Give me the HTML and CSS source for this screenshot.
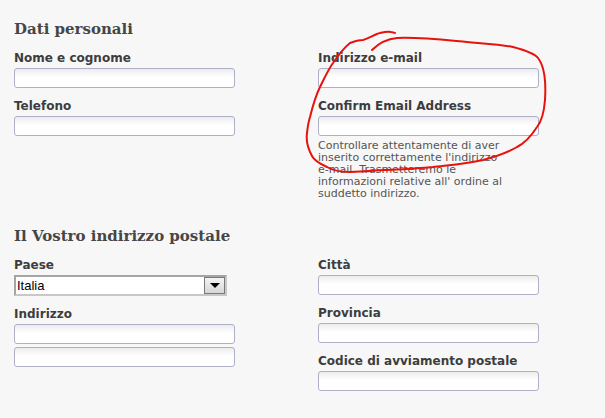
FILE: index.html
```html
<!DOCTYPE html>
<html lang="it">
<head>
    <meta charset="UTF-8" />
    <title>Dati personali</title>
    <link rel="stylesheet" href="styles.css">
</head>
<body>
    <main class="pagina">
        <section class="sezione">
            <h2>Dati personali</h2>
            <div class="colonne">
                <div class="colonna">
                    <label class="campo">Nome e cognome
                        <input type="text" class="testo">
                    </label>
                    <label class="campo">Telefono
                        <input type="text" class="testo">
                    </label>
                </div>
                <div class="colonna">
                    <label class="campo">Indirizzo e-mail
                        <input type="text" class="testo">
                    </label>
                    <label class="campo">Confirm Email Address
                        <input type="text" class="testo">
                    </label>
                    <p class="aiuto">Controllare attentamente di aver inserito correttamente l'indirizzo <span class="unito">e-mail.</span> Trasmetteremo le informazioni relative all' ordine al suddetto indirizzo.</p>
                </div>
            </div>

            <!-- cerchio rosso disegnato a mano -->
            <svg class="cerchio" width="605" height="220" viewBox="0 0 605 220">
                <path d="M372 50 C378 44 386 39 397 38 C420 37 445 40 467 42 C490 44 505 45 513 47 C528 51 535 54 538 58 C545 67 546 84 545 100 C544 113 541 122 537 127 C530 138 525 143 517 147 C505 154 495 157 483 160 C465 164 450 165 433 167 C410 169 395 170 383 170 C370 171 360 172 350 172 C340 172 332 170 327 167 C318 163 314 160 312 156 C307 147 306 140 307 133 C308 124 309 120 310 117 C313 105 316 95 320 87 C325 77 328 70 333 63 C339 54 344 48 350 43 C355 41 358 40 363 40 C370 38 375 34 380 33 C384 32 388 31 391 32 C393 32 394 33 395 33" />
            </svg>
        </section>

        <section class="sezione">
            <h2>Il Vostro indirizzo postale</h2>
            <div class="colonne">
                <div class="colonna">
                    <label class="campo">Paese
                        <span class="scelta">
                            <select>
                                <option>Italia</option>
                            </select>
                            <span class="freccia"></span>
                        </span>
                    </label>
                    <label class="campo">Indirizzo
                        <input type="text" class="testo">
                    </label>
                    <input type="text" class="testo riga2">
                </div>
                <div class="colonna">
                    <label class="campo">Città
                        <input type="text" class="testo">
                    </label>
                    <label class="campo">Provincia
                        <input type="text" class="testo">
                    </label>
                    <label class="campo">Codice di avviamento postale
                        <input type="text" class="testo">
                    </label>
                </div>
            </div>
        </section>
    </main>
</body>
</html>
```

FILE: styles.css
```css
* {
    box-sizing: border-box;
}

body {
    margin: 0;
    background: #f7f7f7;
    font-family: 'DejaVu Sans', Verdana, sans-serif;
    color: #444;
}

.pagina {
    padding: 19px 0 0 14px;
}

.sezione {
    position: relative;
}

.sezione + .sezione {
    margin-top: 26px;
}

h2 {
    font-family: 'DejaVu Serif', Georgia, serif;
    font-size: 15px;
    font-weight: 700;
    color: #464646;
    margin: 0 0 11px;
    line-height: 20px;
}

.colonne {
    display: grid;
    grid-template-columns: 304px 1fr;
}

.campo {
    display: block;
    font-size: 12px;
    font-weight: 700;
    line-height: 16px;
    margin-bottom: 10px;
    color: #3d3d3d;
}

.testo {
    display: block;
    width: 221px;
    height: 20px;
    margin-top: 2px;
    border: 1px solid #aeb0c8;
    border-radius: 3px;
    background: linear-gradient(#ececec, #fff 8px);
    font-size: 12px;
}

.riga2 {
    margin-top: -7px;
}

.aiuto {
    margin: -6px 0 0;
    width: 192px;
    font-size: 11px;
    line-height: 12px;
    color: #555;
}

.unito {
    white-space: nowrap;
}

/* select stile windows */
.scelta {
    display: flex;
    width: 213px;
    height: 21px;
    margin-top: 2px;
    border: 2px solid #a5a5a5;
    border-right-color: #c8c8c8;
    border-bottom-color: #c8c8c8;
    background: #fff;
}

.scelta select {
    flex: 1;
    appearance: none;
    border: none;
    background: transparent;
    font-family: 'Liberation Sans', Arial, sans-serif;
    font-size: 13px;
    color: #000;
    padding: 0 1px;
    outline: none;
}

.freccia {
    width: 21px;
    border: 1px solid #7a7a7a;
    background: linear-gradient(#f4f4f4, #d6d6d6);
    display: flex;
    align-items: center;
    justify-content: center;
}

.freccia::after {
    content: "";
    border-left: 5px solid transparent;
    border-right: 5px solid transparent;
    border-top: 5px solid #000;
}

.cerchio {
    position: absolute;
    left: -14px;
    top: -19px;
    pointer-events: none;
}

.cerchio path {
    fill: none;
    stroke: #e8120c;
    stroke-width: 2;
    stroke-linecap: round;
}
```
